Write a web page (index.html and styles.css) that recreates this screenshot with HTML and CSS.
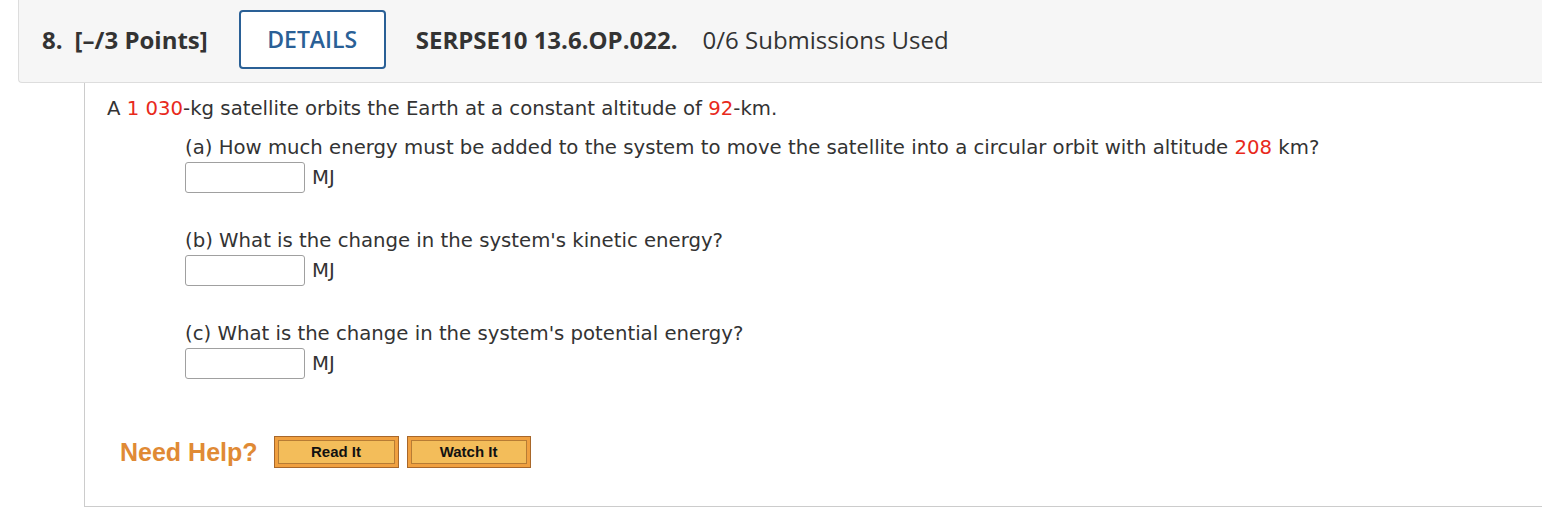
FILE: index.html
```html
<!DOCTYPE html>
<html>
<head>
<meta charset="utf-8">
<link rel="stylesheet" href="styles.css">
</head>
<body>
<div class="header">
  <span class="qnum">8.</span>
  <span class="points">[–/3 Points]</span>
  <button class="details">DETAILS</button>
  <span class="code">SERPSE10 13.6.OP.022.</span>
  <span class="subs">0/6 Submissions Used</span>
</div>
<div class="content">
  <p class="intro">A <span class="red">1 030</span>-kg satellite orbits the Earth at a constant altitude of <span class="red">92</span>-km.</p>
  <div class="part">
    <div class="q">(a) How much energy must be added to the system to move the satellite into a circular orbit with altitude <span class="red">208</span> km?</div>
    <div class="ans"><input class="box" type="text"><span class="unit">MJ</span></div>
  </div>
  <div class="part">
    <div class="q">(b) What is the change in the system's kinetic energy?</div>
    <div class="ans"><input class="box" type="text"><span class="unit">MJ</span></div>
  </div>
  <div class="part">
    <div class="q">(c) What is the change in the system's potential energy?</div>
    <div class="ans"><input class="box" type="text"><span class="unit">MJ</span></div>
  </div>
  <div class="help">
    <span class="need">Need Help?</span>
    <span class="hbtn read"><span class="inner">Read It</span></span>
    <span class="hbtn watch"><span class="inner">Watch It</span></span>
  </div>
</div>
</body>
</html>
```
FILE: styles.css
```css
html, body { margin: 0; padding: 0; background: #fff; }
body { font-family: "Open Sans", sans-serif; color: #333; }

.header {
  margin-left: 18px;
  height: 82px;
  background: #f6f6f6;
  border-left: 1px solid #ddd;
  border-bottom: 1px solid #ddd;
  border-bottom-left-radius: 4px;
  display: flex;
  align-items: center;
  padding-left: 23px;
  box-sizing: content-box;
  font-size: 24px;
}
.header > span { position: relative; top: -2px; }
.qnum { font-weight: 700; margin-right: 12px; }
.points { font-weight: 700; margin-right: 31px; }
.details {
  font-family: "Open Sans", sans-serif;
  font-size: 23px;
  font-weight: 600;
  color: #2a6096;
  background: #fff;
  border: 2px solid #2a6096;
  border-radius: 4px;
  width: 147px;
  height: 59px;
  margin-top: -3px;
  padding: 0 0 2px 0;
  margin-right: 30px;
}
.code { font-weight: 700; margin-right: 25px; }
.subs { font-weight: 400; }

.content {
  margin-left: 84px;
  height: 409px;
  border-left: 1px solid #ccc;
  border-bottom: 1px solid #ccc;
  padding-left: 22px;
  padding-top: 14px;
  font-family: Verdana, "DejaVu Sans", sans-serif;
  font-size: 19.7px;
  color: #333;
}
.red { color: #e8291c; }
.intro { margin: 0 0 15px 0; line-height: 24px; }
.part { margin-left: 78px; margin-bottom: 36px; }
.q { line-height: 24px; }
.ans { display: flex; align-items: center; margin-top: 2px; }
.box {
  width: 120px;
  height: 31px;
  box-sizing: border-box;
  border: 1px solid #a0a0a0;
  border-radius: 3px;
  margin: 0;
  padding: 0;
  background: #fff;
}
.unit { margin-left: 7px; }

.help { display: flex; align-items: center; margin-left: 13px; margin-top: 57px; }
.need {
  font-family: "Liberation Sans", Arial, sans-serif;
  font-weight: 700;
  font-size: 25px;
  color: #e08a35;
  margin-right: 16px;
}
.hbtn {
  display: inline-block;
  border: 1px solid #a8672a;
  background: #f0a040;
  padding: 3px;
  margin-right: 8px;
}
.hbtn .inner {
  display: block;
  background: #f3bd5a;
  border: 1px solid #b77c34;
  height: 22px;
  line-height: 22px;
  text-align: center;
  font-family: "Liberation Sans", Arial, sans-serif;
  font-weight: 700;
  font-size: 15px;
  color: #111;
}
.read .inner { width: 115px; }
.watch .inner { width: 114px; }
```
